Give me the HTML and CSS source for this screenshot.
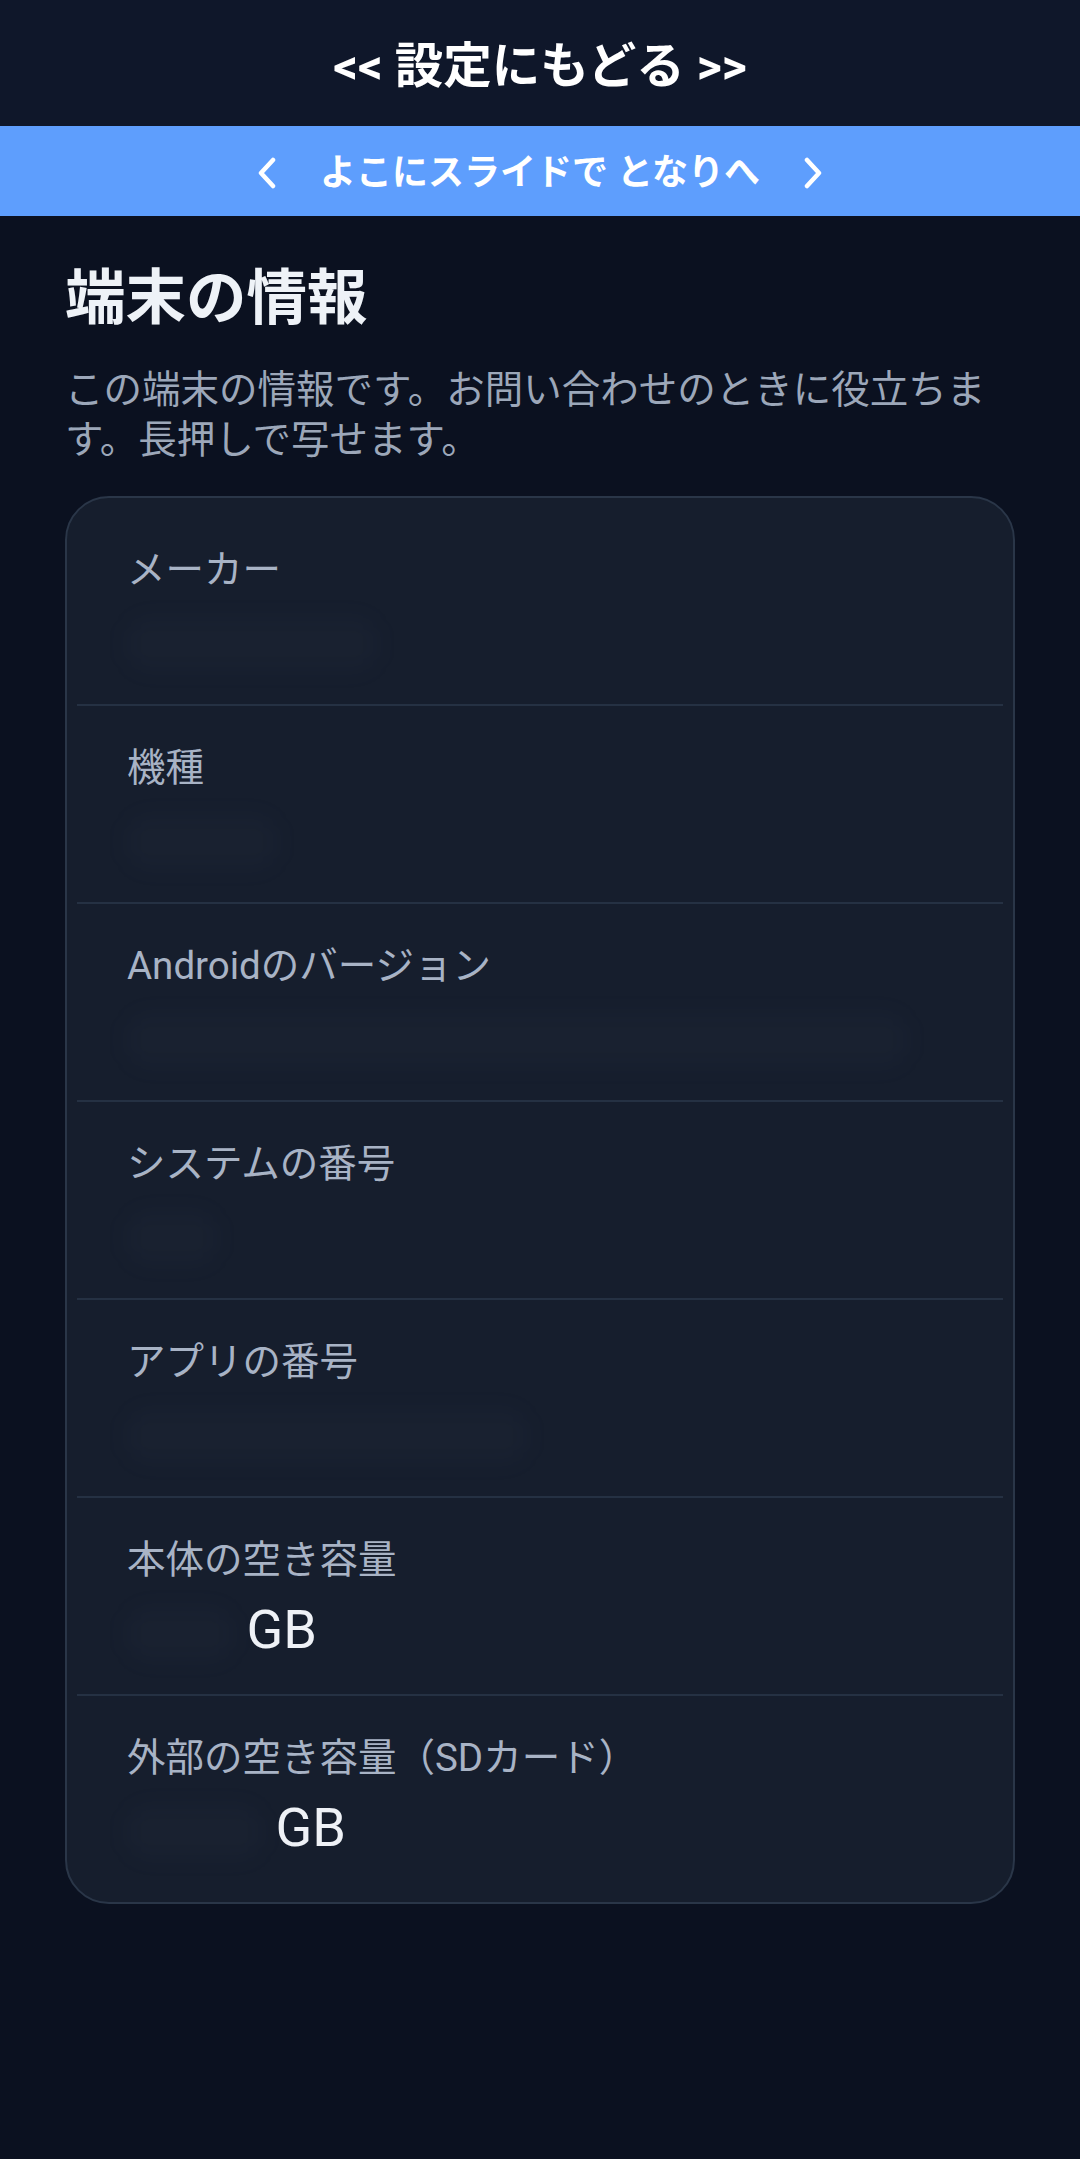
FILE: index.html
```html
<!DOCTYPE html>
<html lang="ja">
<head>
<meta charset="utf-8">
<meta name="viewport" content="width=1080">
<title>端末の情報</title>
<link rel="stylesheet" href="styles.css">
</head>
<body>
<header class="topbar">
  <span class="back">&lt;&lt; 設定にもどる &gt;&gt;</span>
</header>
<div class="slidebar">
  <svg class="chev" viewBox="0 0 20 32" aria-hidden="true"><path d="M16 3 L4 16 L16 29"/></svg>
  <span class="slide-text">よこにスライドで となりへ</span>
  <svg class="chev" viewBox="0 0 20 32" aria-hidden="true"><path d="M4 3 L16 16 L4 29"/></svg>
</div>
<main class="content">
  <h1 class="title">端末の情報</h1>
  <p class="desc">この端末の情報です。お問い合わせのときに役立ちます。長押しで写せます。</p>
  <section class="card">
    <div class="row">
      <div class="label">メーカー</div>
      <div class="value"><span class="blur" style="width:250px"></span></div>
    </div>
    <div class="row">
      <div class="label">機種</div>
      <div class="value"><span class="blur" style="width:150px"></span></div>
    </div>
    <div class="row">
      <div class="label">Androidのバージョン</div>
      <div class="value"><span class="blur" style="width:780px"></span></div>
    </div>
    <div class="row">
      <div class="label">システムの番号</div>
      <div class="value"><span class="blur" style="width:90px"></span></div>
    </div>
    <div class="row">
      <div class="label">アプリの番号</div>
      <div class="value"><span class="blur" style="width:400px"></span></div>
    </div>
    <div class="row">
      <div class="label">本体の空き容量</div>
      <div class="value"><span class="blur" style="width:106px"></span> GB</div>
    </div>
    <div class="row">
      <div class="label">外部の空き容量（SDカード）</div>
      <div class="value"><span class="blur" style="width:135px"></span> GB</div>
    </div>
  </section>
</main>
</body>
</html>
```

FILE: styles.css
```css
html, body {
  margin: 0;
  padding: 0;
}
body {
  background: #0b1120;
  min-height: 100vh;
  font-family: Roboto, "Noto Sans CJK JP", sans-serif;
  color: #e5e9f0;
}
.topbar {
  height: 126px;
  box-sizing: border-box;
  padding-top: 8px;
  background: #0f172a;
  display: flex;
  align-items: center;
  justify-content: center;
}
.back {
  font-size: 48.5px;
  font-weight: 700;
  color: #ffffff;
  line-height: 60px;
}
.slidebar {
  height: 90px;
  box-sizing: border-box;
  padding-top: 3px;
  background: #5e9efd;
  display: flex;
  align-items: center;
  justify-content: center;
  gap: 43px;
  color: #ffffff;
}
.chev {
  width: 20px;
  height: 32px;
  fill: none;
  stroke: #ffffff;
  stroke-width: 4.5;
  stroke-linecap: round;
  stroke-linejoin: round;
}
.slide-text {
  font-size: 36px;
  font-weight: 700;
  line-height: 48px;
}
.content {
  padding: 44px 65px 0;
}
.title {
  margin: 0;
  font-size: 60.5px;
  font-weight: 700;
  line-height: 78px;
  color: #eef2f7;
}
.desc {
  margin: 27px 0 0;
  font-size: 38.5px;
  line-height: 50px;
  color: #9ca7b9;
}
.card {
  margin-top: 31px;
  background: #161e2d;
  border: 2.5px solid #2a3648;
  border-radius: 44px;
  padding: 10px;
}
.row {
  height: 198px;
  box-sizing: border-box;
  padding: 33px 50px 0;
  border-bottom: 2px solid #253143;
}
.row:last-child {
  border-bottom: none;
  height: 196px;
}
.label {
  font-size: 38.5px;
  line-height: 58px;
  color: #a8b3c5;
  white-space: nowrap;
}
.value {
  margin-top: 3px;
  font-size: 54px;
  line-height: 76px;
  height: 76px;
  color: #eef1f6;
  white-space: nowrap;
}
.blur {
  display: inline-block;
  height: 54px;
  vertical-align: middle;
  border-radius: 18px;
  background: rgba(148, 163, 184, 0.028);
  filter: blur(12px);
}
```
